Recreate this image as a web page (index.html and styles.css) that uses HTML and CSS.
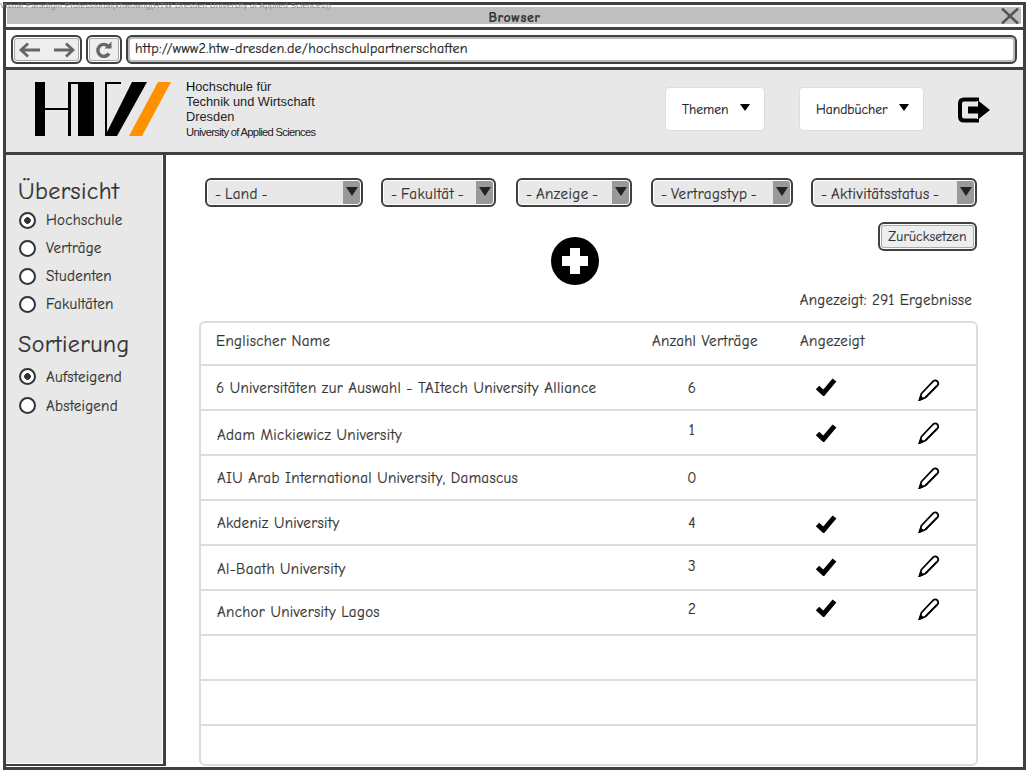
FILE: index.html
```html
<!DOCTYPE html>
<html lang="de">
<head>
  <meta charset="UTF-8" />
  <title>Browser</title>
  <link rel="stylesheet" href="styles.css">
</head>
<body>
  <div class="watermark">Visual Paradigm Professional(khwowng(HTW Dresden University of Applied Sciences))</div>
  <div class="window">
    <!-- title bar -->
    <div class="titlebar">
      <span class="title">Browser</span>
      <svg class="close" viewBox="0 0 18 16" width="18" height="16"><path d="M1 0.5 L17 15.5 M17 0.5 L1 15.5" stroke="#555" stroke-width="2.6" fill="none"/></svg>
    </div>

    <!-- address bar -->
    <div class="addressbar">
      <div class="btn nav-btn">
        <svg viewBox="0 0 58 18" width="58" height="18"><path d="M22 9 H3 M10 2.5 L3 9 L10 15.5 M36 9 H55 M48 2.5 L55 9 L48 15.5" stroke="#666" stroke-width="2.8" fill="none"/></svg>
      </div>
      <div class="btn reload-btn">
        <svg viewBox="0 0 18 18" width="18" height="18"><path d="M13.5 5.5 A6 6 0 1 0 14 12.5" stroke="#666" stroke-width="3.4" fill="none"/><path d="M9.5 7.5 H16.5 V0.5 Z" fill="#666"/></svg>
      </div>
      <div class="url">http://www2.htw-dresden.de/hochschulpartnerschaften</div>
    </div>

    <!-- header -->
    <div class="header">
      <svg class="logo" viewBox="0 0 136 54" width="136" height="54">
        <path d="M0 0 H10 V26 H33 V2 H33 V0 H59 V54 H43 V2 H36 V54 H33 V28 H10 V54 H0 Z" fill="#000"/>
        <path d="M70 0 H86 V2 H72 V54 H70 Z" fill="#000"/>
        <path d="M97 0 H112 L82 54 H70 Z" fill="#000"/>
        <path d="M123 0 H136 L107 54 H94 Z" fill="#ff9000"/>
      </svg>
      <div class="logo-text">
        <div><b class="initial">H</b>ochschule für</div>
        <div>Technik und Wirtschaft</div>
        <div>Dresden</div>
        <div class="logo-sub">University of Applied Sciences</div>
      </div>
      <div class="menu menu-themen">Themen <span class="tri"></span></div>
      <div class="menu menu-hand">Handbücher <span class="tri"></span></div>
      <svg class="logout" viewBox="0 0 32 26" width="32" height="26">
        <path d="M19 4 V2.5 H6 Q2 2.5 2 6.5 V19.5 Q2 23.5 6 23.5 H19 V22" stroke="#000" stroke-width="4" fill="none"/>
        <path d="M10 9.5 H20 V3.5 L32 13 L20 22.5 V16.5 H10 Z" fill="#000"/>
      </svg>
    </div>

    <div class="body">
      <!-- sidebar -->
      <div class="sidebar">
        <h2 class="side-title">Übersicht</h2>
        <div class="radio on">Hochschule</div>
        <div class="radio">Verträge</div>
        <div class="radio">Studenten</div>
        <div class="radio">Fakultäten</div>
        <h2 class="side-title second">Sortierung</h2>
        <div class="radio wide on">Aufsteigend</div>
        <div class="radio wide">Absteigend</div>
      </div>

      <!-- main -->
      <div class="main">
        <div class="filters">
          <div class="select w-land">- Land -</div>
          <div class="select w-fak">- Fakultät -</div>
          <div class="select w-anz">- Anzeige -</div>
          <div class="select w-typ">- Vertragstyp -</div>
          <div class="select w-akt">- Aktivitätsstatus -</div>
        </div>
        <div class="reset-row"><div class="btn reset">Zurücksetzen</div></div>
        <div class="add">
          <svg viewBox="0 0 48 48" width="48" height="48"><circle cx="24" cy="24" r="24" fill="#000"/><path d="M19 11 H29 V19 H37 V29 H29 V37 H19 V29 H11 V19 H19 Z" fill="#fff"/></svg>
        </div>
        <div class="count">Angezeigt: 291 Ergebnisse</div>

        <div class="table">
          <div class="row head">
            <div class="cell name-head up-3">Englischer Name</div>
            <div class="cell count-head up-3">Anzahl Verträge</div>
            <div class="cell shown-head up-3">Angezeigt</div>
            <div class="cell"></div>
          </div>
          <div class="row">
            <div class="cell name first">6 Universitäten zur Auswahl - TAItech University Alliance</div>
            <div class="cell num">6</div>
            <div class="cell icon"><svg class="check"><use href="#check"/></svg></div>
            <div class="cell icon down-2"><svg class="pencil"><use href="#pencil"/></svg></div>
          </div>
          <div class="row">
            <div class="cell name down-2">Adam Mickiewicz University</div>
            <div class="cell num up-3">1</div>
            <div class="cell icon down-1"><svg class="check"><use href="#check"/></svg></div>
            <div class="cell icon"><svg class="pencil"><use href="#pencil"/></svg></div>
          </div>
          <div class="row">
            <div class="cell name">AIU Arab International University, Damascus</div>
            <div class="cell num">0</div>
            <div class="cell icon"></div>
            <div class="cell icon"><svg class="pencil"><use href="#pencil"/></svg></div>
          </div>
          <div class="row">
            <div class="cell name">Akdeniz University</div>
            <div class="cell num">4</div>
            <div class="cell icon down-2"><svg class="check"><use href="#check"/></svg></div>
            <div class="cell icon up-1"><svg class="pencil"><use href="#pencil"/></svg></div>
          </div>
          <div class="row">
            <div class="cell name down-1">Al-Baath University</div>
            <div class="cell num up-2">3</div>
            <div class="cell icon"><svg class="check"><use href="#check"/></svg></div>
            <div class="cell icon up-2"><svg class="pencil"><use href="#pencil"/></svg></div>
          </div>
          <div class="row">
            <div class="cell name up-1">Anchor University Lagos</div>
            <div class="cell num up-4">2</div>
            <div class="cell icon up-4"><svg class="check"><use href="#check"/></svg></div>
            <div class="cell icon up-4"><svg class="pencil"><use href="#pencil"/></svg></div>
          </div>
          <div class="row"></div>
          <div class="row"></div>
          <div class="row last"></div>
        </div>
      </div>
    </div>
  </div>

  <!-- shared icons -->
  <svg class="defs" width="0" height="0">
    <symbol id="check" viewBox="0 0 22 19"><path d="M2.5 10.5 L8.5 16 L19.5 3" stroke="#000" stroke-width="5" fill="none"/></symbol>
    <symbol id="pencil" viewBox="0 0 22 22"><path d="M3.5 14.5 L15.5 2 Q17.5 0.5 19.5 2.5 Q21 4.5 19.5 6.5 L7.5 18.5 L1.5 21 Z" stroke="#000" stroke-width="1.8" fill="none"/><path d="M7.5 18.5 L18.5 7 M1.5 21 L2.8 17.5 L5 19.6 Z" stroke="#000" stroke-width="1.5" fill="#000"/></symbol>
  </svg>
</body>
</html>
```

FILE: styles.css
```css
* {
  box-sizing: border-box;
}

html, body {
  height: 774px;
  overflow: hidden;
}

body {
  margin: 0;
  padding: 2px 4px 4px 3px;
  background: white;
  color: #333;
  font-family: "Comic Sans MS", "Comic Neue", cursive;
  font-size: 15px;
  -webkit-text-stroke: 0.2px;
  position: relative;
}

.watermark {
  position: absolute;
  left: 0;
  top: 2px;
  font-family: "Liberation Sans", sans-serif;
  font-size: 8px;
  line-height: 8px;
  letter-spacing: 0.28px;
  -webkit-text-stroke: 0;
  color: #888;
  z-index: 5;
  white-space: nowrap;
}

.defs {
  position: absolute;
}

.window {
  height: 768px;
  border: 3px solid #404040;
  background: white;
  display: flex;
  flex-direction: column;
}

/* Title bar */
.titlebar {
  padding: 2px 2px 3px 1px;
  border-bottom: 3px solid #404040;
  height: 25px;
  display: flex;
  position: relative;
}

.titlebar::before {
  content: "";
  flex: 1;
  background: #bfbfbf;
}

.title {
  position: absolute;
  left: 0;
  right: 0;
  top: 4px;
  text-align: center;
  font-weight: bold;
  font-size: 14px;
  letter-spacing: 0.5px;
  line-height: 17px;
  color: #333;
}

.close {
  position: absolute;
  right: 4px;
  top: 3px;
}

/* Address bar */
.addressbar {
  padding: 5px 6px 3px 5px;
  border-bottom: 3px solid #404040;
  height: 40px;
  display: flex;
  gap: 4px;
}

.btn {
  border: 2px solid #404040;
  border-radius: 6px;
  box-shadow: inset 0 0 0 1px #fff, inset 0 0 0 2px #aaa;
  background: #eee;
  display: flex;
  align-items: center;
  justify-content: center;
}

.nav-btn {
  width: 71px;
  height: 29px;
}

.reload-btn {
  width: 36px;
  height: 29px;
}

.url {
  flex: 1;
  height: 29px;
  border: 2px solid #404040;
  border-radius: 6px;
  box-shadow: inset 0 0 0 2px #bbb;
  padding-left: 7px;
  line-height: 23px;
  font-size: 14px;
  letter-spacing: 0.25px;
  color: #222;
}

/* Header */
.header {
  height: 85px;
  border-bottom: 3px solid #404040;
  background: #e8e8e8;
  display: flex;
  align-items: flex-start;
  padding: 12px 0 0 29px;
}

.logo {
  flex: none;
}

.logo-text {
  margin: -2px 0 0 15px;
  font-family: "Liberation Sans", sans-serif;
  font-size: 12.8px;
  line-height: 14.9px;
  -webkit-text-stroke: 0;
  color: #222;
  width: 200px;
}

.initial {
  font-weight: normal;
  color: #000;
}

.logo-sub {
  font-size: 11.2px;
  letter-spacing: -0.68px;
}

.menu {
  height: 44px;
  margin-top: 5px;
  background: white;
  border: 1px solid #ddd;
  border-radius: 4px;
  color: #222;
  display: flex;
  align-items: center;
  justify-content: space-between;
  padding: 0 14px 0 16px;
  font-size: 13.5px;
}

.menu-themen {
  width: 100px;
  margin-left: 279px;
}

.menu-hand {
  width: 125px;
  margin-left: 34px;
}

.tri {
  width: 0;
  height: 0;
  border-left: 5.5px solid transparent;
  border-right: 5.5px solid transparent;
  border-top: 7px solid #000;
  margin-top: -3px;
}

.logout {
  margin: 15px 0 0 34px;
}

/* Body */
.body {
  flex: 1;
  display: flex;
  min-height: 0;
}

.sidebar {
  width: 160px;
  margin-bottom: 1px;
  background: #e8e8e8;
  border-right: 3px solid #404040;
  border-bottom: 2px solid #404040;
  box-shadow: inset -1px -1px 0 white;
  padding: 21px 0 0 12px;
  flex: none;
}

.side-title {
  margin: 0;
  font-size: 24px;
  font-weight: normal;
  letter-spacing: 0.4px;
  line-height: 30px;
  color: #333;
}

.side-title.second {
  margin-top: 11px;
  margin-bottom: 3px;
}

.radio {
  height: 28px;
  margin-left: 1px;
  display: flex;
  align-items: center;
  gap: 10px;
  font-size: 15px;
  letter-spacing: 0.25px;
  color: #333;
}

.radio.wide {
  height: 29px;
}

.radio::before {
  content: "";
  box-sizing: border-box;
  width: 17px;
  height: 17px;
  border: 2px solid #333;
  border-radius: 50%;
  background: white;
  flex: none;
}

.radio.on::before {
  background: radial-gradient(circle, #333 0 3px, white 3.6px);
}

/* Main */
.main {
  flex: 1;
  padding: 23px 0 0 32px;
  min-width: 0;
}

.filters {
  display: flex;
  padding-left: 7px;
}

.select {
  height: 29px;
  border: 2px solid #404040;
  border-radius: 6px;
  box-shadow: inset 0 0 0 1px #fff;
  background: linear-gradient(to left, #999 18px, #e8e8e8 18px);
  padding-left: 8px;
  line-height: 28px;
  font-size: 15px;
  letter-spacing: 0.45px;
  word-spacing: -2px;
  color: #333;
  position: relative;
}

.select::after {
  content: "";
  position: absolute;
  right: 3px;
  top: 7px;
  border-left: 6px solid transparent;
  border-right: 6px solid transparent;
  border-top: 9px solid #222;
}

.w-land { width: 158px; }
.w-fak { width: 115px; margin-left: 18px; }
.w-anz { width: 116px; margin-left: 20px; }
.w-typ { width: 142px; margin-left: 19px; }
.w-akt { width: 166px; margin-left: 18px; }

.reset-row {
  display: flex;
  justify-content: flex-end;
  padding-right: 46px;
  margin-top: 15px;
}

.reset {
  width: 99px;
  height: 29px;
  font-size: 13.5px;
  letter-spacing: 0.2px;
  color: #333;
}

.add {
  margin: -14px 0 0 353px;
  height: 48px;
}

.count {
  margin-top: 7px;
  padding-right: 51px;
  text-align: right;
  font-size: 15px;
  letter-spacing: 0.25px;
  line-height: 17px;
  color: #333;
}

/* Table */
.table {
  width: 779px;
  margin: 12px 0 0 1px;
  border: 2px solid #ddd;
  border-radius: 6px;
  height: 445px;
}

.row {
  height: 45px;
  border-bottom: 2px solid #ddd;
  display: grid;
  grid-template-columns: 431px 120px 147px 60px;
  align-items: center;
}

.row.head {
  height: 43px;
}

.row.last {
  border-bottom: none;
}

.cell {
  font-size: 15px;
  letter-spacing: 0.33px;
  color: #333;
  white-space: nowrap;
}

.name-head { padding-left: 15px; }
.count-head { padding-left: 20px; }
.shown-head { padding-left: 48px; }

.name {
  padding-left: 16px;
}

.name.first {
  padding-left: 15px;
}

.num {
  text-align: center;
}

.icon {
  height: 22px;
}

.check {
  display: block;
  width: 22px;
  height: 19px;
  margin: 0 auto;
}

.pencil {
  display: block;
  width: 22px;
  height: 22px;
  margin: 0 auto;
}

/* rows in the mockup are not quite aligned, margin moves a centered cell by half */
.up-1 { margin-bottom: 2px; }
.up-2 { margin-bottom: 4px; }
.up-3 { margin-bottom: 6px; }
.up-4 { margin-bottom: 8px; }
.down-1 { margin-top: 2px; }
.down-2 { margin-top: 4px; }
```
